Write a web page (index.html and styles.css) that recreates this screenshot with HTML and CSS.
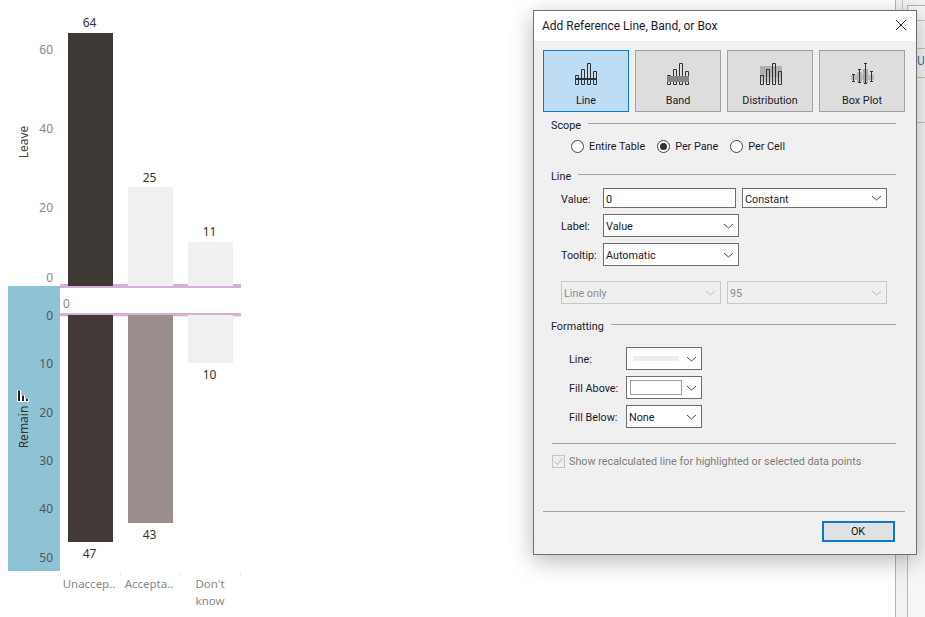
FILE: index.html
```html
<!DOCTYPE html>
<html lang="en">
  <head>
    <meta charset="UTF-8" />
    <title>Add Reference Line, Band, or Box</title>
    <link rel="stylesheet" href="styles.css">
  </head>
  <body>
    <!-- Sheet behind the dialog: free canvas -->
    <div class="side-panel">
      <i class="side-vline"></i>
      <div class="side-box">
        <i class="side-hline h1"></i>
        <i class="side-hline h2"></i>
        <i class="side-hline h3"></i>
        <i class="side-hline h4"></i>
        <span class="side-letter">U</span>
      </div>
    </div>

    <div class="chart">
      <div class="pane-blue"></div>
      <div class="ref-line ref-top"></div>
      <div class="ref-line ref-bottom"></div>

      <div class="axis-title title-leave">Leave</div>
      <div class="axis-title title-remain">Remain</div>
      <svg class="sort-icon" width="12" height="12" viewBox="0 0 12 12">
        <path d="M0 0h4v5h4v4h4v3H0z" fill="#fff"/>
        <path d="M1 0.500h2V11H1zM5 5.500h2V11H5zM9 9h2v2H9z" fill="#222"/>
      </svg>

      <span class="tick t-l60">60</span>
      <span class="tick t-l40">40</span>
      <span class="tick t-l20">20</span>
      <span class="tick t-l0">0</span>
      <span class="tick t-zero">0</span>
      <span class="tick t-r0">0</span>
      <span class="tick t-r10">10</span>
      <span class="tick t-r20">20</span>
      <span class="tick t-r30">30</span>
      <span class="tick t-r40">40</span>
      <span class="tick t-r50">50</span>

      <div class="bar bar-a1"></div>
      <div class="bar bar-a2"></div>
      <div class="bar bar-a3"></div>
      <div class="bar bar-b1"></div>
      <div class="bar bar-b2"></div>
      <div class="bar bar-b3"></div>

      <span class="val v-a1">64</span>
      <span class="val v-a2">25</span>
      <span class="val v-a3">11</span>
      <span class="val v-b1">47</span>
      <span class="val v-b2">43</span>
      <span class="val v-b3">10</span>

      <i class="sep s1"></i><i class="sep s2"></i><i class="sep s3"></i><i class="sep s4"></i>
      <span class="cat c1">Unaccep..</span>
      <span class="cat c2">Accepta..</span>
      <span class="cat c3">Don't<br>know</span>
    </div>

    <div class="dialog">
      <div class="dialog-title">
        <span>Add Reference Line, Band, or Box</span>
        <svg class="close-icon" width="12" height="12" viewBox="0 0 12 12"><path d="M1 1l10 10M11 1L1 11" stroke="#222" stroke-width="1" fill="none"/></svg>
      </div>

      <div class="dialog-body">
        <div class="type-row">
          <div class="type-btn active">
            <svg class="type-icon" width="24" height="24" viewBox="0 0 24 24">
              <path class="bars" d="M1.500 22.500v-9h3v9zM7.500 22.500v-15h3v15zM13.500 22.500v-21h3v21zM19.500 22.500v-13h3v13z"/>
              <rect x="1" y="16" width="22" height="2" fill="#333"/>
            </svg>
            <span>Line</span>
          </div>
          <div class="type-btn">
            <svg class="type-icon" width="24" height="24" viewBox="0 0 24 24">
              <path class="bars" d="M1.500 22.500v-9h3v9zM7.500 22.500v-15h3v15zM13.500 22.500v-21h3v21zM19.500 22.500v-13h3v13z"/>
              <rect x="1" y="14" width="22" height="6" fill="#858585"/>
            </svg>
            <span>Band</span>
          </div>
          <div class="type-btn">
            <svg class="type-icon" width="24" height="24" viewBox="-1 0 24 24">
              <rect x="1" y="4" width="22" height="11" fill="#b0b0b0"/>
              <rect x="1" y="15" width="22" height="5" fill="#c4c4c4"/>
              <path class="bars" d="M1.500 22.500v-9h3v9zM7.500 22.500v-15h3v15zM13.500 22.500v-21h3v21zM19.500 22.500v-13h3v13z"/>
            </svg>
            <span>Distribution</span>
          </div>
          <div class="type-btn">
            <svg class="type-icon" width="24" height="24" viewBox="0 0 24 24">
              <rect x="1" y="13" width="23" height="5" fill="#bbbbbb"/>
              <rect x="7" y="10" width="5" height="10" fill="#b4b4b4"/>
              <rect x="13" y="7" width="5" height="14" fill="#a8a8a8"/>
              <path d="M3.500 12v8M2 12.500h3M2 19.500h3M9.500 7v14M8 7.500h3M8 20.500h3M15.500 1v21M14 1.500h3M14 21.500h3M21.500 9v11M20 9.500h3M20 19.500h3" stroke="#333" stroke-width="1" fill="none"/>
            </svg>
            <span>Box Plot</span>
          </div>
        </div>

        <div class="group-head head-scope"><span>Scope</span><i></i></div>
        <div class="radio-row">
          <label class="radio"><b class="dot"></b><span>Entire Table</span></label>
          <label class="radio"><b class="dot on"></b><span>Per Pane</span></label>
          <label class="radio"><b class="dot"></b><span>Per Cell</span></label>
        </div>

        <div class="group-head head-line"><span>Line</span><i></i></div>
        <div class="field-row row-value">
          <span class="lbl lbl-line">Value:</span>
          <div class="box box-value">0</div>
          <div class="box box-const">Constant<svg class="chev" width="11" height="6" viewBox="0 0 11 6"><path d="M1 1l4.500 4L10 1" stroke="#444" fill="none"/></svg></div>
        </div>
        <div class="field-row row-gap">
          <span class="lbl lbl-line">Label:</span>
          <div class="box box-mid">Value<svg class="chev" width="11" height="6" viewBox="0 0 11 6"><path d="M1 1l4.500 4L10 1" stroke="#444" fill="none"/></svg></div>
        </div>
        <div class="field-row row-gap">
          <span class="lbl lbl-line">Tooltip:</span>
          <div class="box box-mid">Automatic<svg class="chev" width="11" height="6" viewBox="0 0 11 6"><path d="M1 1l4.500 4L10 1" stroke="#444" fill="none"/></svg></div>
        </div>
        <div class="field-row row-disabled">
          <div class="box off box-half">Line only<svg class="chev" width="11" height="6" viewBox="0 0 11 6"><path d="M1 1l4.500 4L10 1" stroke="#bbb" fill="none"/></svg></div>
          <div class="box off box-half">95<svg class="chev" width="11" height="6" viewBox="0 0 11 6"><path d="M1 1l4.500 4L10 1" stroke="#bbb" fill="none"/></svg></div>
        </div>

        <div class="group-head head-format"><span>Formatting</span><i></i></div>
        <div class="field-row row-fmt1">
          <span class="lbl lbl-fmt">Line:</span>
          <div class="box box-fmt box-swatch"><u class="swatch-line"></u><svg class="chev" width="11" height="6" viewBox="0 0 11 6"><path d="M1 1l4.500 4L10 1" stroke="#444" fill="none"/></svg></div>
        </div>
        <div class="field-row row-gap">
          <span class="lbl lbl-fmt">Fill Above:</span>
          <div class="box box-fmt box-swatch"><u class="swatch-fill"></u><svg class="chev" width="11" height="6" viewBox="0 0 11 6"><path d="M1 1l4.500 4L10 1" stroke="#444" fill="none"/></svg></div>
        </div>
        <div class="field-row row-gap">
          <span class="lbl lbl-fmt">Fill Below:</span>
          <div class="box box-fmt">None<svg class="chev" width="11" height="6" viewBox="0 0 11 6"><path d="M1 1l4.500 4L10 1" stroke="#444" fill="none"/></svg></div>
        </div>

        <hr class="rule rule-inner">
        <div class="check-row">
          <svg width="13" height="13" viewBox="0 0 13 13"><rect x="0.500" y="0.500" width="12" height="12" fill="#eee" stroke="#c4c4c4"/><path d="M2.500 6.500l3 3 5-6.500" stroke="#b4b4b4" fill="none"/></svg>
          <span>Show recalculated line for highlighted or selected data points</span>
        </div>

        <div class="spacer"></div>
        <hr class="rule">
        <div class="footer-row"><div class="ok-btn">OK</div></div>
      </div>
    </div>
  </body>
</html>
```

FILE: styles.css
```css
/* General styles */
html,
body {
  margin: 0;
  padding: 0;
  height: 100%;
  overflow: hidden;
  background-color: #ffffff;
  font-family: Roboto, "Noto Sans", sans-serif;
  color: #222;
}

/* Right hand panel peeking out behind the dialog */
.side-panel {
  position: absolute;
  left: 895px;
  top: 0;
  right: 0;
  bottom: 0;
  background-color: #f2f2f2;
  border-left: 1px solid #b4b4b4;
}
.side-vline {
  position: absolute;
  left: 6px;
  top: 0;
  width: 1px;
  height: 12px;
  background-color: #c8c8c8;
}
.side-box {
  position: absolute;
  left: 11px;
  top: 5px;
  right: 0;
  bottom: 0;
  background-color: #f6f6f6;
  border-left: 1px solid #c0baa8;
  border-top: 1px solid #b8b2a0;
}
.side-hline {
  position: absolute;
  left: 0;
  right: 0;
  height: 1px;
  background-color: #c8c2b4;
}
.h1 { top: 14px; }
.h2 { top: 42px; }
.h3 { top: 71px; }
.h4 { top: 116px; }
.side-letter {
  position: absolute;
  left: 9px;
  top: 46px;
  font-size: 12px;
  line-height: 18px;
  color: #4a6f98;
}

/* Chart: every mark sits at its data position */
.chart {
  position: absolute;
  left: 0;
  top: 0;
  width: 260px;
  height: 617px;
  font-size: 12px;
  font-family: "Noto Sans", sans-serif;
}
.pane-blue {
  position: absolute;
  left: 8px;
  top: 286px;
  width: 52px;
  height: 285px;
  background-color: #8dc3d4;
}
.ref-line {
  position: absolute;
  left: 60px;
  width: 181px;
  background-color: #d5b1d5;
}
.ref-top {
  top: 284px;
  height: 4px;
}
.ref-bottom {
  top: 313px;
  height: 3px;
  box-shadow: 0 1px 0 #f2e6f2;
}
.axis-title {
  position: absolute;
  left: 23px;
  transform: translate(-50%, -50%) rotate(-90deg);
  color: #444;
  white-space: nowrap;
}
.title-leave {
  top: 142px;
}
.title-remain {
  top: 427px;
  color: #333;
}
.sort-icon {
  position: absolute;
  left: 17px;
  top: 390px;
}
.tick {
  position: absolute;
  right: 207px;
  color: #888;
  line-height: 14px;
}
.t-l60 { top: 43px; }
.t-l40 { top: 122px; }
.t-l20 { top: 201px; }
.t-l0 { top: 271px; }
.t-r0 { top: 309px; color: #555; }
.t-r10 { top: 357px; color: #555; }
.t-r20 { top: 406px; color: #555; }
.t-r30 { top: 454px; color: #555; }
.t-r40 { top: 502px; color: #555; }
.t-r50 { top: 551px; color: #555; }
.t-zero {
  right: auto;
  left: 63px;
  top: 297px;
}

.bar {
  position: absolute;
  width: 45px;
}
.bar-a1 { left: 68px; top: 33px; height: 253px; background-color: #3e3935; }
.bar-a2 { left: 128px; top: 187px; height: 99px; background-color: #f0f0f0; }
.bar-a3 { left: 188px; top: 242px; height: 44px; background-color: #f0f0f0; }
.bar-b1 { left: 68px; top: 315px; height: 227px; background-color: #433a38; }
.bar-b2 { left: 128px; top: 315px; height: 208px; background-color: #9a8f8d; }
.bar-b3 { left: 188px; top: 315px; height: 48px; background-color: #f0f0f0; }

.val {
  position: absolute;
  width: 45px;
  text-align: center;
  color: #333;
  line-height: 14px;
}
.v-a1 { left: 67px; top: 16px; }
.v-a2 { left: 127px; top: 171px; }
.v-a3 { left: 187px; top: 225px; }
.v-b1 { left: 67px; top: 547px; }
.v-b2 { left: 127px; top: 528px; }
.v-b3 { left: 187px; top: 368px; }

.sep {
  position: absolute;
  top: 572px;
  width: 1px;
  height: 4px;
  background-color: #ececec;
}
.s1 { left: 60px; }
.s2 { left: 120px; }
.s3 { left: 180px; }
.s4 { left: 240px; }
.cat {
  position: absolute;
  top: 575px;
  width: 60px;
  text-align: center;
  color: #888;
  font-size: 11.500px;
  line-height: 17px;
}
.c1 { left: 59px; }
.c2 { left: 119px; }
.c3 { left: 180px; }

/* Dialog */
.dialog {
  position: absolute;
  left: 533px;
  top: 10px;
  width: 382px;
  height: 543px;
  display: flex;
  flex-direction: column;
  background-color: #f0f0f0;
  border: 1px solid #707070;
  box-shadow: 0 6px 22px rgba(0, 0, 0, 0.28);
  font-size: 10.800px;
  color: #1a1a2a;
}
.dialog-title {
  height: 30px;
  flex: none;
  display: flex;
  align-items: center;
  justify-content: space-between;
  padding: 0 9px 0 8px;
  background-color: #ffffff;
  font-size: 12px;
}
.close-icon {
  margin-top: -2px;
}
.dialog-body {
  flex: 1;
  display: flex;
  flex-direction: column;
  padding: 9px 11px 0 9px;
}

.type-row {
  display: flex;
  gap: 6px;
}
.type-btn {
  width: 84px;
  height: 60px;
  display: flex;
  flex-direction: column;
  align-items: center;
  background-color: #dddddd;
  border: 1px solid #a0a0a0;
}
.type-btn.active {
  background-color: #bedcf3;
  border-color: #0878d4;
}
.type-icon {
  margin-top: 11px;
  height: 24px;
}
.type-btn span {
  margin-top: 7px;
  line-height: 16px;
}
.bars {
  fill: none;
  stroke: #333;
  stroke-width: 1;
}

.group-head {
  display: flex;
  gap: 7px;
  margin-left: 8px;
  margin-right: 9px;
  line-height: 15px;
  height: 15px;
}
.group-head i {
  flex: 1;
  height: 1px;
  background-color: #a4a4a4;
  margin-top: 5px;
}
.head-scope { margin-top: 6px; }
.head-line { margin-top: 16px; }
.head-format { margin-top: 15px; }

.radio-row {
  display: flex;
  gap: 12px;
  height: 14px;
  margin: 6px 0 0 28px;
}
.radio {
  display: flex;
  align-items: center;
  gap: 5px;
  line-height: 14px;
}
.radio span {
  padding-top: 2px;
}
.dot {
  width: 11px;
  height: 11px;
  border: 1px solid #444;
  border-radius: 50%;
  background-color: #fff;
  position: relative;
}
.dot.on::after {
  content: "";
  position: absolute;
  left: 2px;
  top: 2px;
  width: 7px;
  height: 7px;
  border-radius: 50%;
  background-color: #333;
}

.field-row {
  display: flex;
  align-items: center;
}
.row-value { margin-top: 4px; }
.row-gap { margin-top: 6px; }
.row-disabled { margin: 15px 0 0 18px; gap: 6px; }
.row-fmt1 { margin-top: 13px; }

.lbl {
  padding-top: 2px;
}
.lbl-line {
  width: 42px;
  margin-left: 18px;
}
.lbl-fmt {
  width: 57px;
  margin-left: 26px;
}
.box {
  height: 23px;
  box-sizing: border-box;
  display: flex;
  align-items: center;
  padding: 2px 2px 0;
  position: relative;
  background-color: #fff;
  border: 1px solid #6e6e6e;
  white-space: nowrap;
}
.box-swatch {
  padding-top: 0;
}
.chev {
  position: absolute;
  right: 4px;
  top: 50%;
  margin-top: -3px;
}
.box.off {
  background-color: #efefef;
  border-color: #c8c8c8;
  color: #8c8c8c;
}
.box-value { width: 133px; height: 20px; }
.box-const { width: 145px; height: 20px; margin-left: 6px; }
.box-mid { width: 136px; }
.box-half { width: 160px; }
.box-fmt { width: 76px; }
.swatch-line {
  width: 46px;
  height: 5px;
  margin-left: 4px;
  background-color: #f2e8f2;
}
.swatch-fill {
  width: 52px;
  height: 15px;
  box-sizing: border-box;
  margin-left: 1px;
  background-color: #fff;
  border: 1px solid #a0a0a0;
}

.rule {
  margin: 0;
  border: 0;
  height: 1px;
  flex: none;
  background-color: #a4a4a4;
}
.rule-inner {
  margin: 15px 9px 0 9px;
}
.check-row {
  display: flex;
  align-items: center;
  gap: 4px;
  margin: 10px 0 0 9px;
  color: #7c7c7c;
  line-height: 15px;
}
.spacer {
  flex: 1;
}
.footer-row {
  display: flex;
  justify-content: flex-end;
  padding: 9px 10px 12px 0;
}
.ok-btn {
  width: 68px;
  height: 17px;
  padding-right: 1px;
  line-height: 17px;
  text-align: center;
  background-color: #e1e1e1;
  border: 2px solid #0878d4;
  color: #111;
}
```
